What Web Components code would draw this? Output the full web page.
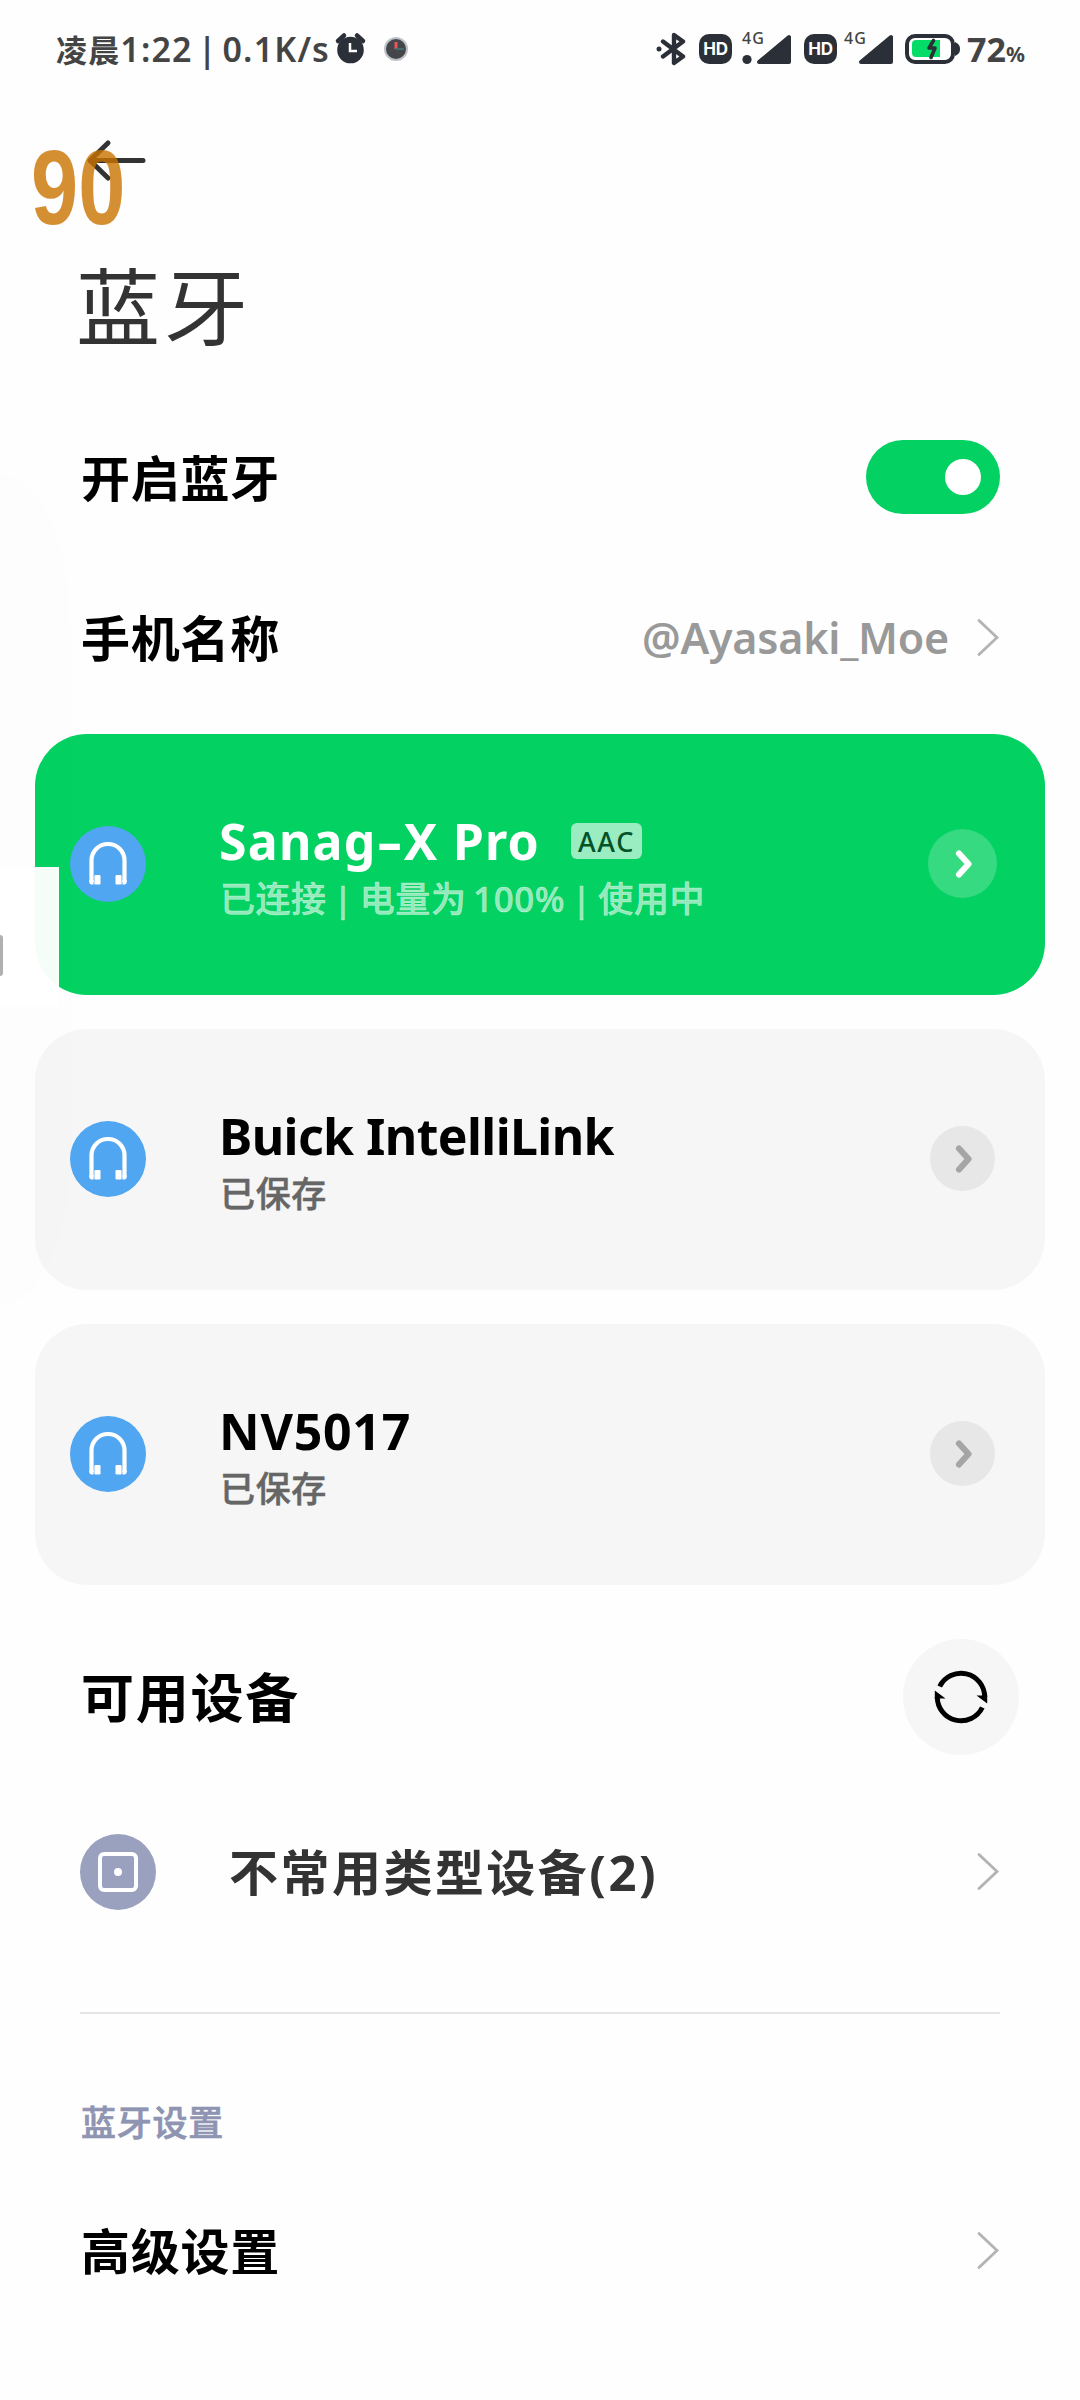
<!DOCTYPE html>
<html lang="zh-CN">
<head>
<meta charset="utf-8">
<title>蓝牙</title>
<style>
html,body{margin:0;padding:0;background:#fefefe}
body{width:1080px;height:2400px;overflow:hidden;font-family:"Noto Sans","Noto Sans CJK SC",sans-serif;color:#000}
</style>
</head>
<body>
<bluetooth-page></bluetooth-page>
<script>
const define = (name, html, setup) => {
  const template = document.createElement('template');
  template.innerHTML = html;
  customElements.define(name, class extends HTMLElement {
    constructor() {
      super();
      this.attachShadow({ mode: 'open' }).appendChild(template.content.cloneNode(true));
    }
    connectedCallback() { if (setup) setup(this, this.shadowRoot); }
  });
};

/* A single line of text whose tracking is adjusted to fill a given width. */
define('fit-text', `<style>:host{display:inline-block;white-space:pre;line-height:1}</style><span><slot></slot></span>`, (el, root) => {
  const span = root.querySelector('span');
  const natural = span.getBoundingClientRect().width;
  const target = Number(el.getAttribute('width'));
  const count = [...el.textContent].length;
  if (natural && target) span.style.letterSpacing = ((target - natural) / count) + 'px';
});

define('hd-badge', `<style>
:host{display:flex;width:33px;height:30px;border-radius:10px;background:#2b2f38;color:#fff;align-items:center;justify-content:center;font:700 17px/30px Inter,sans-serif;letter-spacing:-.3px}
</style><slot></slot>`);

define('signal-meter', `<style>
:host{display:block;width:50px;height:32px;position:relative;color:#444}
span{position:absolute;left:0;top:-2px;font:500 16px/14px "Noto Sans",sans-serif;letter-spacing:1px}
svg{display:block}
</style><span><slot></slot></span>
<svg width="50" height="32"><circle class="dot" cx="5" cy="26.500" r="4.600" fill="#2b2f38"/><path d="M17 29L47 4V29Z" fill="#2b2f38" stroke="#2b2f38" stroke-width="4" stroke-linejoin="round"/></svg>`,
(el, root) => { if (!el.hasAttribute('dot')) root.querySelector('.dot').remove(); });

define('status-bar', `<style>
:host{display:flex;height:100px;box-sizing:border-box;padding:0 55px 2px 56px;align-items:center;justify-content:space-between;color:#444;font-weight:700}
.l,.r{display:flex;align-items:center}
.time{font-size:34px;font-weight:600;word-spacing:-5px}
.c{font-size:31px;font-weight:700}
svg{display:block}
.num{font-size:34px;line-height:34px;margin-left:6px;display:flex;align-items:baseline}
.pct{font-size:21px}
</style>
<div class="l">
<fit-text class="time" width="274"><span class="c">凌晨</span>1:22 | 0.1K/s</fit-text>
<svg width="34" height="36" viewBox="0 0 34 36" style="margin-left:4px"><circle cx="16.500" cy="19" r="13.300" fill="#2b2f38"/><path d="M4 10L10 4.500M23 4.500L29 10" stroke="#2b2f38" stroke-width="4.500" stroke-linecap="round"/><path d="M16 12V20H23" fill="none" stroke="#fff" stroke-width="2.500"/></svg>
<svg width="26" height="26" viewBox="0 0 26 26" style="margin-left:15px"><circle cx="13" cy="13" r="11" fill="#444649" stroke="#bcc2c8" stroke-width="2"/><path d="M13 13V6" stroke="#e5575c" stroke-width="3"/><path d="M13 13H21" stroke="#3f6c6c" stroke-width="2"/></svg>
</div>
<div class="r">
<svg width="32" height="34" viewBox="0 0 32 34"><path d="M7 9.500L27 24.500L18 31V3L27 9.500L7 24.500" fill="none" stroke="#2b2f38" stroke-width="4.400" stroke-linejoin="round" stroke-linecap="round"/><circle cx="3" cy="17" r="2.500" fill="#2b2f38"/></svg>
<hd-badge style="margin-left:11px">HD</hd-badge>
<signal-meter dot style="margin-left:10px">4G</signal-meter>
<hd-badge style="margin-left:12px">HD</hd-badge>
<signal-meter style="margin-left:7px">4G</signal-meter>
<svg width="56" height="30" viewBox="0 0 56 30" style="margin-left:11px"><rect x="2" y="2" width="46" height="26" rx="8" fill="#fff" stroke="#2b2f38" stroke-width="4"/><path d="M50 8C54 10 55 12 55 15S54 20 50 22Z" fill="#2b2f38"/><path d="M11 6H35V23H11Q7 23 7 19V10Q7 6 11 6Z" fill="#04dc68"/><path d="M28.500 6.500L24 14H30L26 23.500" fill="none" stroke="#2b2f38" stroke-width="3.600" stroke-linecap="round" stroke-linejoin="round"/></svg>
<div class="num"><fit-text width="39">72</fit-text><fit-text class="pct" width="19">%</fit-text></div>
</div>`);

define('frame-counter', `<style>
:host{position:absolute;left:31px;top:126px;font:700 106px/122px "Liberation Sans",sans-serif;color:rgba(202,115,0,.8);transform:scaleX(.8);transform-origin:0 0;white-space:nowrap}
</style><slot></slot>`);

define('edge-panel', `<style>
:host{position:absolute;left:0;top:475px;width:71px;height:830px}
.haze{position:absolute;inset:0;border-radius:0 70px 70px 0/0 150px 150px 0;background:rgba(0,0,0,.005)}
.veil{position:absolute;left:0;top:392px;width:59px;height:140px;background:rgba(255,255,255,.96)}
.grip{position:absolute;left:0;top:460px;width:3px;height:41px;background:#b0b0b0;border-radius:0 3px 3px 0}
</style><div class="haze"></div><div class="veil"></div><div class="grip"></div>`);

define('chevron-icon', `<style>:host{display:block}svg{display:block}</style>
<svg width="24" height="40" viewBox="0 0 24 40"><path d="M3 2.500L21 19.500L3 36.500" fill="none" stroke="#b3b3b3" stroke-width="2.800" stroke-linecap="round"/></svg>`);

define('toggle-switch', `<style>
:host{display:flex;box-sizing:border-box;width:134px;height:74px;border-radius:37px;background:#03d162;align-items:center;justify-content:flex-end;padding-right:19px;margin-bottom:2px}
i{width:36px;height:36px;border-radius:50%;background:#fff}
</style><i></i>`);

define('setting-row', `<style>
:host{display:flex;box-sizing:border-box;height:160px;padding:0 80px 0 81px;align-items:center;justify-content:space-between;font-size:49px;font-weight:700}
.e{display:flex;align-items:center}
</style><slot></slot><div class="e"><slot name="end"></slot></div>`);

define('device-card', `<style>
:host{display:flex;box-sizing:border-box;height:261px;margin:0 35px;border-radius:52px;background:#f6f6f6;padding:0 48px 0 35px;align-items:center;--sub:#666}
:host([active]){background:#03d162;color:#fff;--sub:rgba(255,255,255,.58)}
svg{display:block}
.disc{margin-bottom:1px}
.t{flex:1;padding-left:73px;display:flex;flex-direction:column;gap:11px;padding-top:2px}
.n{display:flex;align-items:center;height:54px;font-size:50px;font-weight:700}
.s{display:flex;height:38px;padding-left:1px;align-items:center;font-size:35px;font-weight:500;word-spacing:-3px;color:var(--sub);-webkit-text-stroke:.5px currentColor}
.go{width:69px;height:69px;display:flex;align-items:center;justify-content:center;margin-bottom:2px}
.go i{width:65px;height:65px;border-radius:50%;background:#e7e7e7;color:#a5a5a5;display:flex;align-items:center;justify-content:center}
:host([active]) .go i{width:69px;height:69px;background:rgba(255,255,255,.2);color:#fff}
</style>
<svg class="disc" width="76" height="76" viewBox="0 0 76 76"><circle cx="38" cy="38" r="38" fill="#51a6f1"/><path d="M21.500 56V34.500A16.500 16.500 0 0 1 54.500 34.500V56" fill="none" stroke="#fff" stroke-width="4.200"/><rect x="24.400" y="49" width="6.100" height="9.500" rx="1.200" fill="#fff"/><rect x="45.500" y="49" width="6.100" height="9.500" rx="1.200" fill="#fff"/><path d="M19.400 54H23.600V58.500H21.500Q19.400 58.500 19.400 56.500ZM56.600 54H52.400V58.500H54.500Q56.600 58.500 56.600 56.500Z" fill="#fff"/></svg>
<div class="t"><div class="n"><slot name="name"></slot></div><div class="s"><slot></slot></div></div>
<div class="go"><i><svg width="30" height="34" viewBox="0 0 30 34"><path d="M11 6.500L20.500 17L11 27.500" fill="none" stroke="currentColor" stroke-width="6.200" stroke-linecap="round" stroke-linejoin="round"/></svg></i></div>`);

define('codec-badge', `<style>
:host{display:inline-flex;box-sizing:border-box;width:71px;height:36px;border-radius:6px;background:#9aedc0;color:#03522a;align-items:center;justify-content:center;font-size:27px;font-weight:500;margin-left:31px}
</style><slot></slot>`);

define('bluetooth-page', `<style>
:host{display:block;position:relative;width:1080px;height:2400px;overflow:hidden}
svg{display:block}
.back{height:120px;display:flex;align-items:center;padding-left:84px}
.title{height:174px;display:flex;align-items:center;padding-left:76px;font-size:84px;font-weight:400;color:#333}
.cards{display:flex;flex-direction:column;gap:34px;padding-top:16px}
.dash{display:inline-block;transform:scaleX(1.55);margin:0 5px}
.avail{height:224px;box-sizing:border-box;display:flex;align-items:center;justify-content:space-between;padding:0 61px 0 81px;font-size:53px;font-weight:700}
.refresh{width:116px;height:116px;border-radius:50%;background:#f6f6f6;display:flex;align-items:center;justify-content:center}
.rare{display:flex;align-items:center;gap:73px;color:#333;margin-left:-1px}
.line{height:2px;margin:77px 80px 0;background:#e4e4e4}
.cap{height:114px;margin-top:51px;margin-bottom:1px;padding-left:81px;display:flex;align-items:center;font-size:35px;font-weight:500;color:#8e94b2;-webkit-text-stroke:.7px currentColor}
</style>
<status-bar></status-bar>
<div class="back"><svg width="66" height="50" viewBox="0 0 66 50"><path d="M24 8L6 25.500L24 43M6 25.500H59" fill="none" stroke="#333" stroke-width="5" stroke-linecap="round" stroke-linejoin="round"/></svg></div>
<div class="title"><fit-text width="176">蓝牙</fit-text></div>
<setting-row style="margin-top:4px"><fit-text width="199">开启蓝牙</fit-text><toggle-switch slot="end"></toggle-switch></setting-row>
<setting-row><fit-text width="199">手机名称</fit-text><fit-text slot="end" width="307" style="font-size:43px;font-weight:600;color:#999;margin-right:27px;margin-bottom:2px">@Ayasaki_Moe</fit-text><chevron-icon slot="end"></chevron-icon></setting-row>
<div class="cards">
<device-card active><fit-text slot="name" width="321">Sanag<span class="dash">-</span>X Pro</fit-text><codec-badge slot="name"><fit-text width="57">AAC</fit-text></codec-badge><fit-text width="485">已连接 | 电量为 100% | 使用中</fit-text></device-card>
<device-card><fit-text slot="name" width="395">Buick IntelliLink</fit-text><fit-text width="107">已保存</fit-text></device-card>
<device-card><fit-text slot="name" width="192">NV5017</fit-text><fit-text width="107">已保存</fit-text></device-card>
</div>
<div class="avail"><fit-text width="219">可用设备</fit-text><div class="refresh"><svg width="56" height="56" viewBox="0 0 56 56"><g><path d="M6.700 17.500A23.700 23.700 0 0 1 51.700 28" fill="none" stroke="#000" stroke-width="5"/><path d="M54.200 26V34.500L43.500 26.500H50Z"/></g><g transform="rotate(180 28 28)"><path d="M6.700 17.500A23.700 23.700 0 0 1 51.700 28" fill="none" stroke="#000" stroke-width="5"/><path d="M54.200 26V34.500L43.500 26.500H50Z"/></g></svg></div></div>
<setting-row style="height:126px"><div class="rare"><svg width="76" height="76" viewBox="0 0 76 76"><circle cx="38" cy="38" r="38" fill="#9aa1be"/><rect x="20" y="20" width="36" height="36" rx="4" fill="none" stroke="#fff" stroke-width="4"/><circle cx="38" cy="38" r="4" fill="#fff"/></svg><fit-text width="429">不常用类型设备(2)</fit-text></div><chevron-icon slot="end"></chevron-icon></setting-row>
<div class="line"></div>
<div class="cap"><fit-text width="143">蓝牙设置</fit-text></div>
<setting-row style="height:142px"><fit-text width="199">高级设置</fit-text><chevron-icon slot="end"></chevron-icon></setting-row>
<edge-panel></edge-panel>
<frame-counter>90</frame-counter>`);
</script>
</body>
</html>
